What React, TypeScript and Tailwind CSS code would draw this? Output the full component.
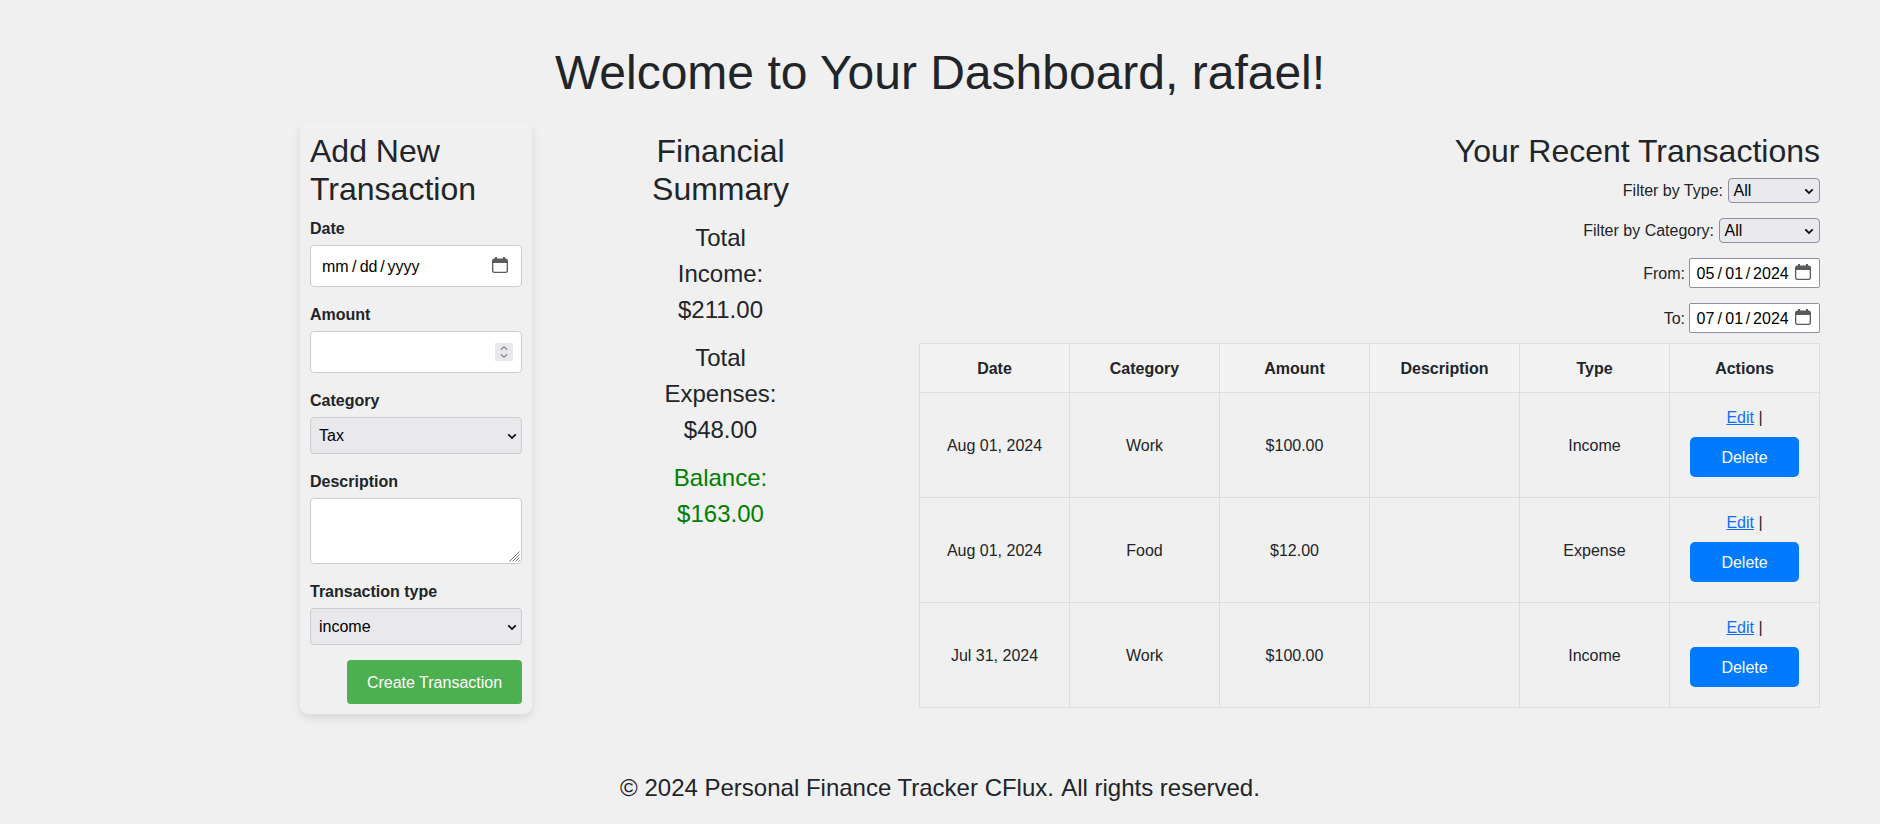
import React from "react";

function CalendarIcon({ className = "" }: { className?: string }) {
  return (
    <svg width="16" height="16" viewBox="0 0 16 16" className={`shrink-0 ${className}`}>
      <path
        fill="#5b5b5b"
        fillRule="evenodd"
        d="M3 0h2v1.5h6V0h2v1.5h.5A2.5 2.5 0 0 1 16 4v9.500A2.500 2.500 0 0 1 13.500 16h-11A2.500 2.500 0 0 1 0 13.500V4a2.500 2.500 0 0 1 2.500-2.500H3zM1.300 6v7.500a1.200 1.200 0 0 0 1.200 1.200h11a1.200 1.200 0 0 0 1.200-1.200V6z"
      />
    </svg>
  );
}

function Chevron({ className = "" }: { className?: string }) {
  return (
    <svg width="10" height="7" viewBox="0 0 10 7" className={`shrink-0 ${className}`}>
      <path d="M1.300 1.300 5 5l3.700-3.700" fill="none" stroke="#000" strokeWidth="1.700" />
    </svg>
  );
}

function DateText({ parts }: { parts: string[] }) {
  return (
    <span className="flex text-black">
      <span>{parts[0]}</span>
      <span className="w-[11px] text-center">/</span>
      <span>{parts[1]}</span>
      <span className="w-[10px] text-center">/</span>
      <span>{parts[2]}</span>
    </span>
  );
}

function Label({ children }: { children: React.ReactNode }) {
  return <div className="mb-[5px] h-6 font-bold leading-[26px]">{children}</div>;
}

function FormSelect({ value }: { value: string }) {
  return (
    <div className="mb-[15px] flex h-[37px] items-center justify-between rounded border border-[#ccc] bg-[#e9e9ed] pl-2 pr-1 pt-px text-black">
      <span>{value}</span>
      <Chevron className="mt-px" />
    </div>
  );
}

function FilterSelect({ label, width }: { label: string; width: string }) {
  return (
    <div className="mb-[15px] flex h-[25px] items-center justify-end">
      <span className="mr-[5px]">{label}</span>
      <div className={`flex h-[25px] items-center justify-between rounded border border-[#8f8f9d] bg-[#e9e9ed] pl-[4.5px] pr-[5px] text-black ${width}`}>
        <span>All</span>
        <Chevron className="mt-px" />
      </div>
    </div>
  );
}

function FilterDate({ label, parts, className }: { label: string; parts: string[]; className: string }) {
  return (
    <div className={`flex h-[30px] items-center justify-end ${className}`}>
      <span className="mr-1 pt-0.5">{label}</span>
      <div className="flex h-[30px] w-[131px] items-center justify-between rounded-xs border border-[#8f8f9d] bg-white pl-[6.5px] pr-2">
        <span className="pt-0.5">
          <DateText parts={parts} />
        </span>
        <CalendarIcon className="-mt-0.5" />
      </div>
    </div>
  );
}

const rows = [
  ["Aug 01, 2024", "Work", "$100.00", "", "Income"],
  ["Aug 01, 2024", "Food", "$12.00", "", "Expense"],
  ["Jul 31, 2024", "Work", "$100.00", "", "Income"],
];

export default function App() {
  return (
    <div className="h-[824px] w-[1880px] overflow-hidden bg-[#f0f0f0] pt-[44px] font-['Liberation_Sans',Arial,sans-serif] text-base leading-6 text-[#212529]">
      <h1 className="h-[78px] text-center text-[48px] leading-[58px]">Welcome to Your Dashboard, rafael!</h1>

      <main className="flex h-[592px] items-start">
        <section className="ml-[300px] h-[592px] w-[232px] shrink-0 rounded-lg p-[10px] shadow-[0_4px_8px_rgba(0,0,0,0.1)]">
          <h2 className="h-[84px] text-[32px] leading-[38.4px]">
            Add New
            <br />
            Transaction
          </h2>
          <Label>Date</Label>
          <div className="mb-[15px] flex h-[42px] items-center justify-between rounded border border-[#ccc] bg-white pl-[11px] pr-[13px] pt-0.5">
            <DateText parts={["mm", "dd", "yyyy"]} />
            <CalendarIcon className="-mt-1" />
          </div>
          <Label>Amount</Label>
          <div className="mb-[15px] flex h-[42px] items-center justify-end rounded border border-[#ccc] bg-white pr-2">
            <div className="flex h-[18px] w-[18px] items-center justify-center bg-[#e9e9ed]">
              <svg width="8" height="12" viewBox="0 0 8 12">
                <path d="M.7 3.800 4 .9l3.300 2.900M.7 8.200 4 11.100l3.300-2.900" fill="none" stroke="#8f8f9d" strokeWidth="1.500" />
              </svg>
            </div>
          </div>
          <Label>Category</Label>
          <FormSelect value="Tax" />
          <Label>Description</Label>
          <div className="mb-[15px] flex h-[66px] items-end justify-end rounded border border-[#ccc] bg-white p-px">
            <svg width="11" height="11" viewBox="0 0 11 11">
              <path d="M.5 10.500l10-10M3.500 10.500l7-7M6.500 10.500l4-4M9.500 10.500l1-1" stroke="#777" strokeWidth="1" fill="none" />
            </svg>
          </div>
          <Label>Transaction type</Label>
          <FormSelect value="income" />
          <div className="flex justify-end">
            <button className="h-11 w-[175px] rounded bg-[#4caf50] pt-0.5 text-white">Create Transaction</button>
          </div>
        </section>

        <section className="ml-[108px] w-[161px] shrink-0 pt-[10px] text-center text-2xl leading-9">
          <h2 className="mb-[11px] text-[32px] leading-[38.4px]">Financial Summary</h2>
          <p className="mb-3">Total<br />Income:<br />$211.00</p>
          <p className="mb-3">Total<br />Expenses:<br />$48.00</p>
          <p className="text-[#008000]">Balance:<br />$163.00</p>
        </section>

        <section className="ml-[118px] w-[901px] shrink-0 pt-[10px]">
          <h2 className="mb-2 h-[38px] text-right text-[32px] leading-[38.4px]">
            Your Recent Transactions
          </h2>
          <FilterSelect label="Filter by Type:" width="w-[92px]" />
          <FilterSelect label="Filter by Category:" width="w-[101px]" />
          <FilterDate label="From:" parts={["05", "01", "2024"]} className="mb-[15px]" />
          <FilterDate label="To:" parts={["07", "01", "2024"]} className="mb-[10px]" />
          <table className="w-[901px] table-fixed border-collapse text-center">
            <thead>
              <tr className="h-[49px] bg-[#f2f2f2]">
                {["Date", "Category", "Amount", "Description", "Type", "Actions"].map((h) => (
                  <th key={h} className="border border-[#ddd] p-0 pt-0.5 font-bold">{h}</th>
                ))}
              </tr>
            </thead>
            <tbody>
              {rows.map((row, i) => (
                <tr key={i} className="h-[105px]">
                  {row.map((cell, j) => (
                    <td key={j} className="border border-[#ddd] p-0 pt-0.5">{cell}</td>
                  ))}
                  <td className="border border-[#ddd] px-5 pb-[19px] pt-[13px] align-top">
                    <div className="h-6">
                      <a className="text-[#0d6efd] underline">Edit</a> |
                    </div>
                    <button className="mt-[7px] block h-10 w-[109px] rounded-[5px] bg-[#007bff] pt-0.5 text-white">Delete</button>
                  </td>
                </tr>
              ))}
            </tbody>
          </table>
        </section>
      </main>

      <footer className="mt-14 text-center text-2xl leading-9">
        © 2024 Personal Finance Tracker CFlux. <span className="ml-[0.5px]">All</span> rights reserved.
      </footer>
    </div>
  );
}
